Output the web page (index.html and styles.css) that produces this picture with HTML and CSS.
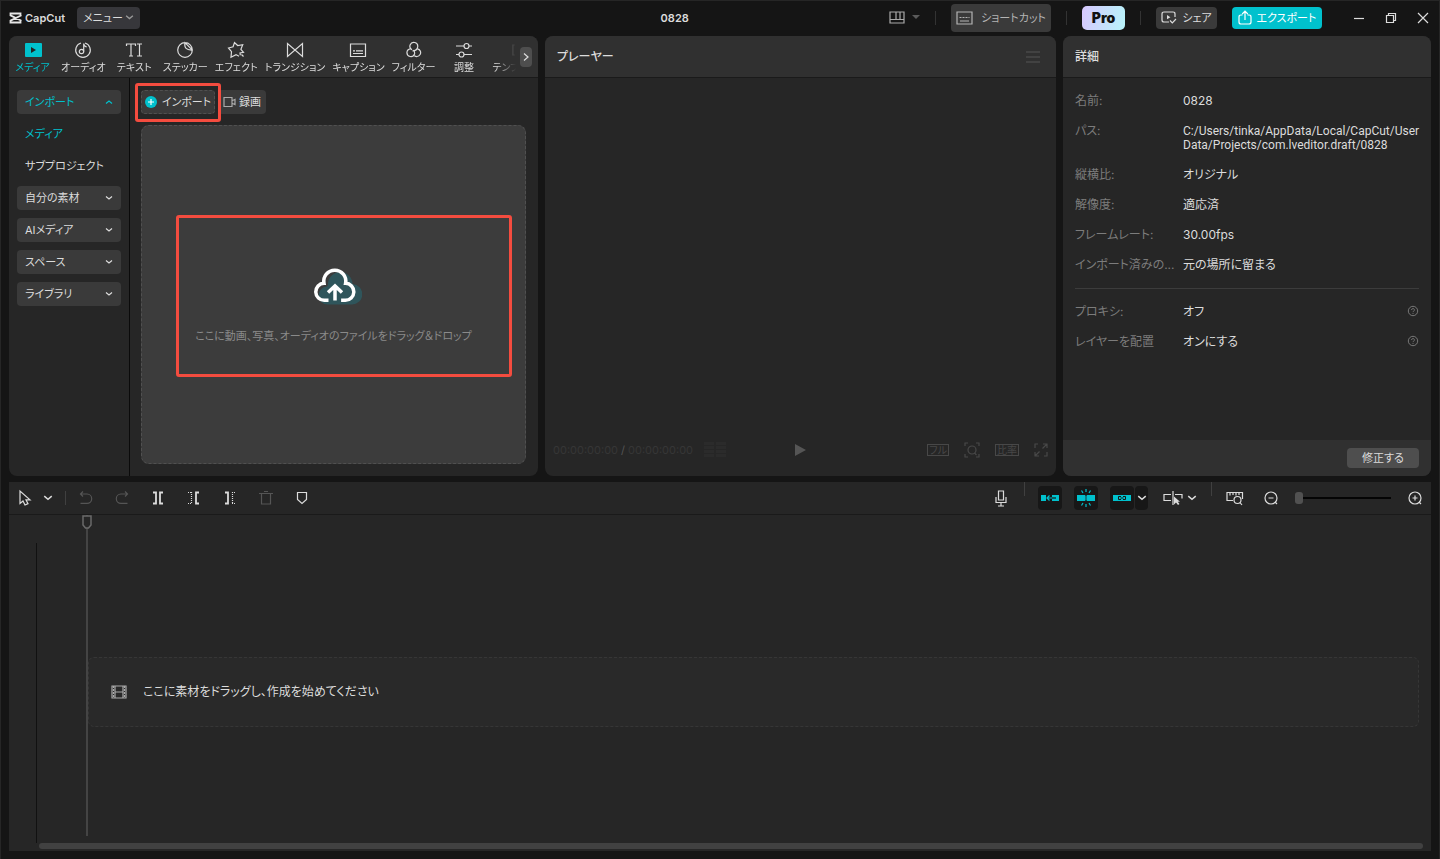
FILE: index.html
```
<!DOCTYPE html>
<html lang="ja">
<head>
    <meta charset="UTF-8">
    <meta name="viewport" content="width=device-width, initial-scale=1.0">
    <title>CapCut - 0828</title>
    <link rel="stylesheet" href="styles.css">
</head>
<body>
    <!-- Shared icons -->
    <svg class="sprite" aria-hidden="true">
        <symbol id="chevron-down" viewBox="0 0 8 8"><path d="M1 2.5l3 2.5 3-2.5"/></symbol>
        <symbol id="help" viewBox="0 0 12 12"><circle cx="6" cy="6" r="4.7"/><path d="M4.6 5a1.4 1.4 0 1 1 2 1.2q-.6.3-.6.9M6 8v.9"/></symbol>
    </svg>

    <!-- Title bar -->
    <header class="titlebar">
        <div class="logo">
            <svg width="13" height="12" viewBox="0 0 13 12"><path d="M11.5 3V1.5H1.5V3.4L12.5 8.7M11.5 9v1.5H1.5V8.6L12.5 3.3" fill="none" stroke="#e6e6e6" stroke-width="1.8"/></svg>
            <span>CapCut</span>
        </div>
        <button class="btn menu-btn" type="button">メニュー <svg class="icon" width="9" height="9"><use href="#chevron-down"/></svg></button>
        <h1 class="project-name">0828</h1>
        <div class="title-actions">
            <button class="plain layout-btn" type="button" aria-label="レイアウト">
                <svg class="icon" width="16" height="13" viewBox="0 0 16 13"><path d="M1 1h14v11H1zM1 8.5h14M7 1v7.500M11 1v7.500"/></svg>
                <svg width="8" height="5" viewBox="0 0 8 5"><path d="M0 0h8L4 4z" fill="#5a5a5a"/></svg>
            </button>
            <span class="sep"></span>
            <button class="btn shortcut-btn" type="button">
                <svg class="icon" width="17" height="14" viewBox="0 0 17 14"><path d="M1 1h15v12H1zM4 10h9"/><path d="M3.5 6.5h10" stroke-dasharray="2 1"/></svg>
                ショートカット
            </button>
            <span class="sep"></span>
            <button class="pro-btn" type="button">Pro</button>
            <span class="sep"></span>
            <button class="btn share-btn" type="button">
                <svg class="icon" width="16" height="13" viewBox="0 0 16 13"><path d="M14 6V3q0-2-2-2H3Q1 1 1 3v6q0 2 2 2h5M9 9.5l2.3 2.3L15 8"/><path d="M6 4l3.4 2.2L6 8.3z" fill="currentColor" stroke="none"/></svg>
                シェア
            </button>
            <button class="btn export-btn" type="button">
                <svg class="icon" width="14" height="15" viewBox="0 0 14 15"><path d="M4.5 5H3Q1 5 1 7v5q0 2 2 2h8q2 0 2-2V7q0-2-2-2H9.500M7 10V1.500M4.200 4L7 1.200 9.800 4"/></svg>
                エクスポート
            </button>
        </div>
        <div class="window-controls">
            <button class="plain" type="button" aria-label="最小化"><svg class="icon" width="12" height="12" viewBox="0 0 12 12"><path d="M1 6.500h10"/></svg></button>
            <button class="plain" type="button" aria-label="元に戻す"><svg class="icon" width="12" height="12" viewBox="0 0 12 12"><path d="M1.500 3.500h7v7h-7zM3.500 3V1.500h7v7H9"/></svg></button>
            <button class="plain" type="button" aria-label="閉じる"><svg class="icon" width="12" height="12" viewBox="0 0 12 12"><path d="M1 1l10 10M11 1L1 11"/></svg></button>
        </div>
    </header>

    <main class="workspace">
        <!-- Media panel -->
        <section class="panel media-panel">
            <nav class="tabs">
                <div class="tab-list">
                    <button class="tab active" type="button"><svg width="18" height="18" viewBox="0 0 18 18"><rect x="1" y="2" width="17" height="14" rx="1" fill="#00c1cd"/><path d="M7 6l5 3-5 3z" fill="#222"/></svg>メディア</button>
                    <button class="tab" type="button"><svg class="icon" width="18" height="18" viewBox="0 0 18 18"><path d="M11 2a7.300 7.300 0 1 1-4 0M9.700 10.500V2.500q0 2.500 3 3.500"/><circle cx="7.500" cy="10.500" r="2.200"/></svg>オーディオ</button>
                    <button class="tab" type="button"><svg class="icon" width="18" height="18" viewBox="0 0 18 18"><path d="M1.500 5V3h9v2M6 3v12M4 15h4M12 3h5M14.500 3v12M12 15h5"/></svg>テキスト</button>
                    <button class="tab" type="button"><svg class="icon" width="18" height="18" viewBox="0 0 18 18"><path d="M9 1.700A7.300 7.300 0 1 0 16.300 9L9 1.700Q7.500 9.500 16.300 9A7.300 7.300 0 0 0 9 1.700"/></svg>ステッカー</button>
                    <button class="tab" type="button"><svg class="icon" width="18" height="18" viewBox="0 0 18 18"><path d="M12 15.300l-3-1.700-5 2.600.5-5.500L1.500 7l4.600-1.200L7.500 1.500l3.200 3 5-.8-1.800 4.600 2.600 3-3.500.6.300 2.400M14.500 13.500l2 2"/></svg>エフェクト</button>
                    <button class="tab" type="button"><svg class="icon" width="18" height="18" viewBox="0 0 18 18"><path d="M1.500 2.500v13L16.500 2.500v13z"/></svg>トランジション</button>
                    <button class="tab" type="button"><svg class="icon" width="18" height="18" viewBox="0 0 18 18"><path d="M1.500 3h15v12.500h-15zM4 12.500h10"/><path d="M4 9.800h2m1 0h7"/></svg>キャプション</button>
                    <button class="tab" type="button"><svg class="icon" width="18" height="18" viewBox="0 0 18 18"><path d="M7 8.700a3.900 3.900 0 1 1 5.700-2.900q-.6 4-5.200 4M5.500 7.800a3.900 3.900 0 1 0 4 5.200q.5-2-1-4M12.500 7.800a3.900 3.900 0 1 1-3.700 6.400"/></svg>フィルター</button>
                    <button class="tab" type="button"><svg class="icon" width="18" height="18" viewBox="0 0 18 18"><path d="M1 5h8M14 5h3M1 13.500h3M9 13.500h8"/><circle cx="11.500" cy="5" r="2.500"/><circle cx="6.500" cy="13.500" r="2.500"/></svg>調整</button>
                    <button class="tab" type="button"><svg class="icon" width="18" height="18" viewBox="0 0 18 18"><path d="M18 4h-2v10h2"/></svg>テンプ</button>
                </div>
                <button class="tab-next" type="button" aria-label="次へ"><svg class="icon" width="8" height="10" viewBox="0 0 8 10"><path d="M2 1.500L6 5 2 8.500"/></svg></button>
            </nav>
            <div class="media-body">
                <aside class="sidebar">
                    <button class="side-group active" type="button">インポート <svg class="icon flip" width="8" height="8"><use href="#chevron-down"/></svg></button>
                    <a class="side-link active" href="#media">メディア</a>
                    <a class="side-link" href="#sub">サブプロジェクト</a>
                    <button class="side-group" type="button">自分の素材 <svg class="icon" width="8" height="8"><use href="#chevron-down"/></svg></button>
                    <button class="side-group" type="button">AIメディア <svg class="icon" width="8" height="8"><use href="#chevron-down"/></svg></button>
                    <button class="side-group" type="button">スペース <svg class="icon" width="8" height="8"><use href="#chevron-down"/></svg></button>
                    <button class="side-group" type="button">ライブラリ <svg class="icon" width="8" height="8"><use href="#chevron-down"/></svg></button>
                </aside>
                <div class="media-content" id="media">
                    <div class="import-row">
                        <div class="import-wrap">
                            <button class="import-btn" type="button">
                                <svg width="12" height="12" viewBox="0 0 12 12"><circle cx="6" cy="6" r="6" fill="#00c1cd"/><path d="M6 3v6M3 6h6" stroke="#fff" stroke-width="1.200"/></svg>
                                インポート
                            </button>
                            <span class="marker"></span>
                        </div>
                        <button class="record-btn" type="button">
                            <svg class="icon" width="13" height="12" viewBox="0 0 13 12"><path d="M1 1.500h8v9H1zM9.500 4.500L12 3.500v5l-2.500-1"/></svg>
                            録画
                        </button>
                    </div>
                    <div class="dropzone">
                        <svg width="56" height="40" viewBox="-3 0 56 40">
                            <path d="M19 38.500a9 9 0 0 1-1-18q1-1 1-2a12.200 12.200 0 1 1 24.500-.500a10.200 10.200 0 0 1-1 20.500z" fill="#2f555b"/>
                            <path d="M19.500 34.300h-4a8.500 8.500 0 0 1-.5-17a11 11 0 1 1 21.600 0a8.500 8.500 0 0 1-.5 17h-4" fill="none" stroke="#fff" stroke-width="3.500"/>
                            <path d="M26 34.500V20.500M19 26.500l7-6.500 7 6.500" fill="none" stroke="#fff" stroke-width="3.500"/>
                        </svg>
                        <p>ここに動画、写真、オーディオのファイルをドラッグ＆ドロップ</p>
                        <span class="marker"></span>
                    </div>
                </div>
            </div>
        </section>

        <!-- Player -->
        <section class="panel player-panel">
            <div class="panel-head">
                <h2>プレーヤー</h2>
                <button class="plain dim" type="button" aria-label="プレーヤーメニュー"><svg class="icon" width="14" height="12" viewBox="0 0 14 12"><path d="M0 1h14M0 6h14M0 11h14"/></svg></button>
            </div>
            <div class="player-screen"></div>
            <div class="player-bar">
                <div class="timecode">00:00:00:00 <b>/</b> 00:00:00:00
                    <svg class="meter" width="22" height="16" viewBox="0 0 22 16"><path d="M5 0v16M17 0v16" stroke="#2b2b2b" stroke-width="10" stroke-dasharray="3 1"/></svg>
                </div>
                <button class="plain" type="button" aria-label="再生"><svg width="11" height="12" viewBox="0 0 11 12"><path d="M0 0l11 6-11 6z" fill="#555"/></svg></button>
                <div class="player-tools">
                    <button class="boxed" type="button">フル</button>
                    <button class="plain" type="button" aria-label="拡大"><svg class="icon" width="16" height="16" viewBox="0 0 16 16"><path d="M1 4V1h3M12 1h3v3M15 12v3h-3M4 15H1v-3M10.500 11l2 2"/><circle cx="8" cy="8" r="4"/></svg></button>
                    <button class="boxed" type="button">比率</button>
                    <button class="plain" type="button" aria-label="全画面"><svg class="icon" width="14" height="14" viewBox="0 0 14 14"><path d="M1 5V1h3M9 1h4v4M13 9v4h-3M5 13H1V9M8.500 5.500L13 1M5.500 8.500L1 13"/></svg></button>
                </div>
            </div>
        </section>

        <!-- Details -->
        <section class="panel details-panel">
            <div class="panel-head"><h2>詳細</h2></div>
            <div class="details">
                <dl>
                    <dt>名前:</dt><dd>0828</dd>
                    <dt>パス:</dt><dd class="path">C:/Users/tinka/AppData/Local/CapCut/User Data/Projects/com.lveditor.draft/0828</dd>
                    <dt>縦横比:</dt><dd>オリジナル</dd>
                    <dt>解像度:</dt><dd>適応済</dd>
                    <dt>フレームレート:</dt><dd>30.00fps</dd>
                    <dt>インポート済みの...</dt><dd>元の場所に留まる</dd>
                </dl>
                <dl>
                    <dt>プロキシ:</dt><dd>オフ <svg class="icon" width="12" height="12"><use href="#help"/></svg></dd>
                    <dt>レイヤーを配置</dt><dd>オンにする <svg class="icon" width="12" height="12"><use href="#help"/></svg></dd>
                </dl>
            </div>
            <div class="details-foot"><button type="button">修正する</button></div>
        </section>
    </main>

    <!-- Timeline -->
    <section class="timeline">
        <div class="toolbar">
            <div class="tools">
                <button class="tool" type="button" aria-label="選択"><svg class="icon" width="16" height="18" viewBox="0 0 16 18"><path d="M3 2v12.500l3-2.500 2 4 3-1.400-2-3.800h4z"/></svg></button>
                <button class="tool-arrow" type="button" aria-label="ツール"><svg class="icon" width="10" height="10"><use href="#chevron-down"/></svg></button>
                <span class="sep"></span>
                <button class="tool dim" type="button" aria-label="元に戻す"><svg class="icon" width="14" height="14" viewBox="0 0 14 14"><path d="M4 .5L1.500 3 4 5.500M1.500 3H8a4.700 4.700 0 0 1 0 9.400H1.500"/></svg></button>
                <button class="tool dim" type="button" aria-label="やり直す"><svg class="icon" width="14" height="14" viewBox="0 0 14 14"><path d="M10 .5L12.500 3 10 5.500M12.500 3H6a4.700 4.700 0 0 0 0 9.400h6.500"/></svg></button>
                <button class="tool" type="button" aria-label="分割"><svg class="icon bold" width="12" height="14" viewBox="0 0 12 14"><path d="M1 1.500h3v11H1M11 1.500H8v11h3"/></svg></button>
                <button class="tool" type="button" aria-label="左を削除"><svg class="icon" width="12" height="14" viewBox="0 0 12 14"><path d="M0 1.500h4M0 12.500h4M3.500 1v12" stroke-dasharray="1 1"/><path class="bold" d="M11 1.500H8v11h3"/></svg></button>
                <button class="tool" type="button" aria-label="右を削除"><svg class="icon" width="12" height="14" viewBox="0 0 12 14"><path class="bold" d="M1 1.500h3v11H1"/><path d="M8 1.500h4M8 12.500h4M8.500 1v12" stroke-dasharray="1 1"/></svg></button>
                <button class="tool dim" type="button" aria-label="削除"><svg class="icon" width="14" height="14" viewBox="0 0 14 14"><path d="M0 2.500h14M2.500 2.500v10.500h9V2.500M5 .5h4"/></svg></button>
                <button class="tool" type="button" aria-label="マーカー"><svg class="icon" width="12" height="14" viewBox="0 0 12 14"><path d="M1.500 1.500h9v7L6 12.500 1.500 8.500z"/></svg></button>
            </div>
            <div class="tools">
                <button class="tool" type="button" aria-label="録音"><svg class="icon" width="12" height="17" viewBox="0 0 12 17"><path d="M3.500 1h5v9h-5zM1 7v5.500h10V7M6 12.500V16M3 16h6"/></svg></button>
                <span class="sep top"></span>
                <button class="toggle" type="button" aria-label="メイントラック"><svg width="18" height="8" viewBox="0 0 18 8"><path d="M0 1h5v6H0zM11 1h7v6h-7z" fill="#00c1cd"/><path d="M8.500 1.500L6 4l2.500 2.500M6 4h5" fill="none" stroke="#00c1cd" stroke-width="1.200"/><path d="M11 4h4" stroke="#171717" stroke-width="1.200"/></svg></button>
                <button class="toggle" type="button" aria-label="自動スナップ"><svg width="18" height="18" viewBox="0 0 18 18"><path d="M0 6h8v6H0zM10 6h8v6h-8z" fill="#00c1cd"/><path d="M9 0v3M9 15v3M4.500 1.500l1.500 2.500M13.500 1.500L12 4M4.500 16.500L6 14M13.500 16.500L12 14M9 6.500v5" stroke="#00c1cd" stroke-width="1.200"/></svg></button>
                <div class="toggle-pair">
                    <button class="toggle" type="button" aria-label="リンク"><svg width="18" height="8" viewBox="0 0 18 8"><path d="M0 1h18v6H0z" fill="#00c1cd"/><path d="M8 2.500H5.500v3H8M10 2.500h2.500v3H10M7.500 4h3" fill="none" stroke="#171717"/></svg></button>
                    <button class="toggle narrow" type="button" aria-label="リンクのオプション"><svg class="icon" width="10" height="10"><use href="#chevron-down"/></svg></button>
                </div>
                <button class="tool preview" type="button" aria-label="プレビュー軸"><svg class="icon" width="20" height="16" viewBox="0 0 20 16"><path d="M8 4.500H1v6h7M12 4.500h7v4M10 1v14"/><path d="M11 6.500v8l2-2 2 2.500 1.500-1-1.800-2.300H17z" fill="currentColor" stroke="none"/></svg><svg class="icon" width="10" height="10"><use href="#chevron-down"/></svg></button>
                <span class="sep top"></span>
                <button class="tool" type="button" aria-label="全体表示"><svg class="icon" width="18" height="15" viewBox="0 0 18 15"><path d="M7 9.500H1V1.500h15.500V8M4 2v2.500M7 2v2M10 2v2.500M13 2v2"/><circle cx="11.500" cy="9" r="3.500"/><path d="M14 11.500l2 2.500"/></svg></button>
                <button class="tool" type="button" aria-label="縮小"><svg class="icon" width="16" height="16" viewBox="0 0 16 16"><circle cx="8" cy="8" r="6"/><path d="M5.500 8h5M12 12l2 2"/></svg></button>
                <input class="zoom" type="range" min="0" max="100" value="0" aria-label="ズーム">
                <button class="tool" type="button" aria-label="拡大"><svg class="icon" width="16" height="16" viewBox="0 0 16 16"><circle cx="8" cy="8" r="6"/><path d="M5.500 8h5M8 5.500v5M12 12l2 2"/></svg></button>
            </div>
        </div>
        <div class="tracks">
            <div class="track-head"></div>
            <div class="lanes">
                <div class="lane">
                    <svg class="icon film" width="16" height="14" viewBox="0 0 16 14"><path d="M1 1h14v12H1zM4 1v12M12 1v12M4 7h8"/><path d="M2.500 1v12M13.500 1v12" stroke-dasharray="2 1"/></svg>
                    ここに素材をドラッグし、作成を始めてください
                </div>
                <div class="playhead"><svg width="10" height="14" viewBox="0 0 10 14"><path d="M1 1h8v9l-2.500 3h-3L1 10z" fill="#262626" stroke="#6a6a6a" stroke-width="1.500"/></svg></div>
            </div>
        </div>
        <div class="scroll"></div>
    </section>
</body>
</html>
```
FILE: styles.css
```
* {
    margin: 0;
    padding: 0;
    box-sizing: border-box;
}

body {
    font-family: Inter, "Noto Sans CJK JP", sans-serif;
    font-feature-settings: "palt";
    font-size: 12px;
    line-height: 14px;
    color: #dcdcdc;
    background-color: #151515;
    border: 1px solid #262626;
    border-bottom: none;
    min-height: 100vh;
    padding: 0 8px 8px;
    display: flex;
    flex-direction: column;
}

button {
    font: inherit;
    font-feature-settings: inherit;
    color: inherit;
    background: none;
    border: none;
    white-space: nowrap;
    display: flex;
    align-items: center;
    justify-content: center;
    cursor: pointer;
}

svg {
    display: block;
    flex-shrink: 0;
}

h1, h2 {
    font-size: 12px;
    font-weight: 500;
}

.sprite {
    position: absolute;
    width: 0;
    height: 0;
}

.icon {
    fill: none;
    stroke: currentColor;
    stroke-width: 1.2;
}

.bold {
    stroke-width: 1.8;
}

.flip {
    transform: rotate(180deg);
}

.sep {
    width: 1px;
    height: 14px;
    background-color: #333;
}

.dim {
    color: #555;
}

/* Title bar */
.titlebar {
    height: 35px;
    padding-bottom: 2px;
    display: flex;
    align-items: center;
}

.logo {
    display: flex;
    align-items: center;
    gap: 3px;
    font-size: 11px;
    font-weight: 600;
    margin-right: 12px;
}

.btn {
    height: 22px;
    padding: 0 7px;
    border-radius: 4px;
    background-color: #3a3a3a;
    font-size: 11px;
    gap: 5px;
}

.menu-btn {
    background-color: #37373b;
    width: 63px;
    gap: 2px;
}

.menu-btn .icon {
    color: #999;
}

.project-name {
    flex: 1;
    display: flex;
    font-size: 11px;
    font-weight: 600;
}

.project-name::before {
    content: "";
    flex: 13;
}

.project-name::after {
    content: "";
    flex: 5;
}

.title-actions {
    display: flex;
    align-items: center;
    gap: 15px;
}

.layout-btn {
    gap: 7px;
    color: #aaa;
}

.shortcut-btn {
    height: 28px;
    width: 100px;
    color: #b4b4b4;
    gap: 8px;
}

.pro-btn {
    width: 43px;
    height: 24px;
    border-radius: 5px;
    background: linear-gradient(100deg, #d8c8ff, #b8f4fa);
    color: #111;
    font-size: 14px;
    font-weight: 900;
}

.share-btn {
    width: 61px;
}

.export-btn {
    width: 90px;
    background-color: #00c1cd;
    color: #fff;
}

.window-controls {
    display: flex;
    gap: 20px;
    margin-left: 31px;
    padding-right: 2px;
}

/* Panels */
.workspace {
    flex: 440 0 0px;
    display: grid;
    grid-template-columns: 529fr 511fr 368fr;
    gap: 7px;
    margin-bottom: 6px;
}

.panel {
    background-color: #262626;
    border-radius: 8px;
    overflow: hidden;
    display: flex;
    flex-direction: column;
    min-width: 0;
}

.panel-head, .tabs {
    height: 42px;
    background-color: #303030;
    border-bottom: 1px solid #1a1a1a;
    display: flex;
    align-items: center;
    justify-content: space-between;
}

.panel-head {
    padding: 0 16px 0 12px;
}

.tabs {
    padding-right: 6px;
    gap: 4px;
}

.tab-list {
    flex: 1;
    min-width: 0;
    overflow: hidden;
    display: flex;
    gap: 7px;
    padding-left: 2px;
    mask-image: linear-gradient(to right, #000 96%, transparent);
}

.tab {
    flex-shrink: 0;
    flex-direction: column;
    min-width: 43px;
    font-size: 10px;
    line-height: 12px;
    gap: 2px;
}

.tab:last-child {
    min-width: 0;
}

.tab.active, .side-group.active, .side-link.active {
    color: #00c1cd;
}

.tab-next {
    width: 12px;
    height: 20px;
    border-radius: 4px;
    background-color: #4e4e4e;
}

.media-body {
    flex: 1;
    display: flex;
}

.sidebar {
    width: 121px;
    padding: 12px 8px;
    border-right: 1px solid #0a0a0a;
    display: flex;
    flex-direction: column;
    gap: 8px;
    font-size: 11px;
}

.side-group {
    height: 24px;
    padding: 0 8px;
    border-radius: 4px;
    background-color: #3a3a3a;
    justify-content: space-between;
}

.side-link {
    line-height: 24px;
    padding: 0 8px;
    color: inherit;
    text-decoration: none;
}

.media-content {
    flex: 1;
    padding: 12px 12px 12px 11px;
    display: flex;
    flex-direction: column;
    gap: 11px;
}

.import-row {
    display: flex;
    gap: 3px;
    font-size: 11px;
}

.import-wrap, .dropzone {
    position: relative;
}

.import-btn, .record-btn {
    height: 24px;
    padding: 0 5px;
    border-radius: 4px;
    background-color: #3a3a3a;
    gap: 3px;
}

.import-btn {
    width: 74px;
    border: 1px dashed #505050;
    gap: 5px;
}

.record-btn .icon {
    color: #aaa;
}

.dropzone {
    flex: 1;
    border: 1px dashed #505050;
    border-radius: 8px;
    background-color: #3c3c3c;
    display: flex;
    flex-direction: column;
    align-items: center;
    justify-content: center;
    gap: 23px;
    padding-top: 20px;
    font-size: 11px;
    color: #8a8a8a;
}

/* Red highlight frames */
.marker {
    position: absolute;
    inset: -7px -6px -8px;
    border: 3px solid #f44c3f;
    border-radius: 3px;
    pointer-events: none;
}

.dropzone .marker {
    inset: 89px 13px 86px 34px;
}

/* Player */
.player-screen {
    flex: 1;
}

.player-bar {
    height: 52px;
    padding: 0 8px;
    display: grid;
    grid-template-columns: 1fr auto 1fr;
    align-items: center;
    color: #484848;
}

.timecode {
    display: flex;
    align-items: center;
    gap: 3px;
    font-size: 11px;
    color: #363636;
}

.timecode b {
    font-weight: 400;
    color: #555;
}

.meter {
    margin-left: 8px;
}

.player-tools {
    display: flex;
    align-items: center;
    justify-content: flex-end;
    gap: 15px;
}

.boxed {
    height: 12px;
    border: 1px solid #484848;
    font-size: 10px;
    padding: 0 1px;
}

/* Details */
.details {
    flex: 1;
    padding: 16px 12px;
}

dl {
    display: grid;
    grid-template-columns: 108px 1fr;
    row-gap: 16px;
}

dl + dl {
    margin-top: 16px;
    padding-top: 16px;
    border-top: 1px solid #3c3c3c;
}

dt {
    color: #7c7c7c;
}

dd {
    display: flex;
    justify-content: space-between;
}

dd.path {
    font-family: Roboto, "Noto Sans CJK JP", sans-serif;
}

dd .icon {
    color: #777;
    stroke-width: 1;
}

.details-foot {
    height: 36px;
    padding: 0 12px;
    background-color: #303030;
    display: flex;
    align-items: center;
    justify-content: flex-end;
}

.details-foot button {
    width: 72px;
    height: 20px;
    border-radius: 4px;
    background-color: #4e4e4e;
    font-size: 11px;
}

/* Timeline */
.timeline {
    flex: 369 0 0px;
    background-color: #262626;
    display: flex;
    flex-direction: column;
}

.toolbar {
    height: 33px;
    padding: 0 6px;
    border-bottom: 1px solid #1a1a1a;
    display: flex;
    align-items: center;
    justify-content: space-between;
}

.tools {
    display: flex;
    align-items: center;
    gap: 16px;
}

.tool {
    width: 20px;
    height: 24px;
}

.tool-arrow {
    width: 14px;
    height: 24px;
    margin-left: -10px;
}

.tools .sep {
    margin: 0 -6px;
    background-color: #404040;
}

.tools .sep.top {
    align-self: flex-start;
    margin: -4px -3px 0;
}

.toggle {
    width: 24px;
    height: 24px;
    border-radius: 4px;
    background-color: #171717;
}

.toggle + .toggle, .toggle + .toggle-pair {
    margin-left: -4px;
}

.toggle-pair {
    display: flex;
    gap: 1px;
}

.toggle-pair .narrow {
    width: 13px;
    margin-left: 0;
}

.preview {
    width: 36px;
    gap: 4px;
    margin-left: -2px;
}

.zoom {
    appearance: none;
    width: 96px;
    height: 12px;
    margin: 0 -2px;
    background: linear-gradient(#050505, #050505) center / 100% 2px no-repeat;
}

.zoom::-webkit-slider-thumb {
    appearance: none;
    width: 8px;
    height: 12px;
    border-radius: 3px;
    background-color: #515151;
}

.tracks {
    flex: 1;
    display: flex;
}

.track-head {
    width: 28px;
    margin-top: 28px;
    border-right: 1px solid #111;
}

.lanes {
    flex: 1;
    position: relative;
    padding: 26px 12px 0 51px;
    display: flex;
    flex-direction: column;
    justify-content: center;
}

.lane {
    height: 70px;
    padding: 0 22px;
    border: 1px dashed #363636;
    border-radius: 6px;
    background-color: #292929;
    display: flex;
    align-items: center;
    gap: 16px;
}

.film {
    color: #aaa;
}

.playhead {
    position: absolute;
    top: 0;
    bottom: 7px;
    left: 45px;
    width: 10px;
    background: linear-gradient(#444, #444) center / 2px 100% no-repeat;
}

.scroll {
    height: 6px;
    margin: 0 8px 2px 30px;
    border-radius: 3px;
    background-color: #414141;
}
```
